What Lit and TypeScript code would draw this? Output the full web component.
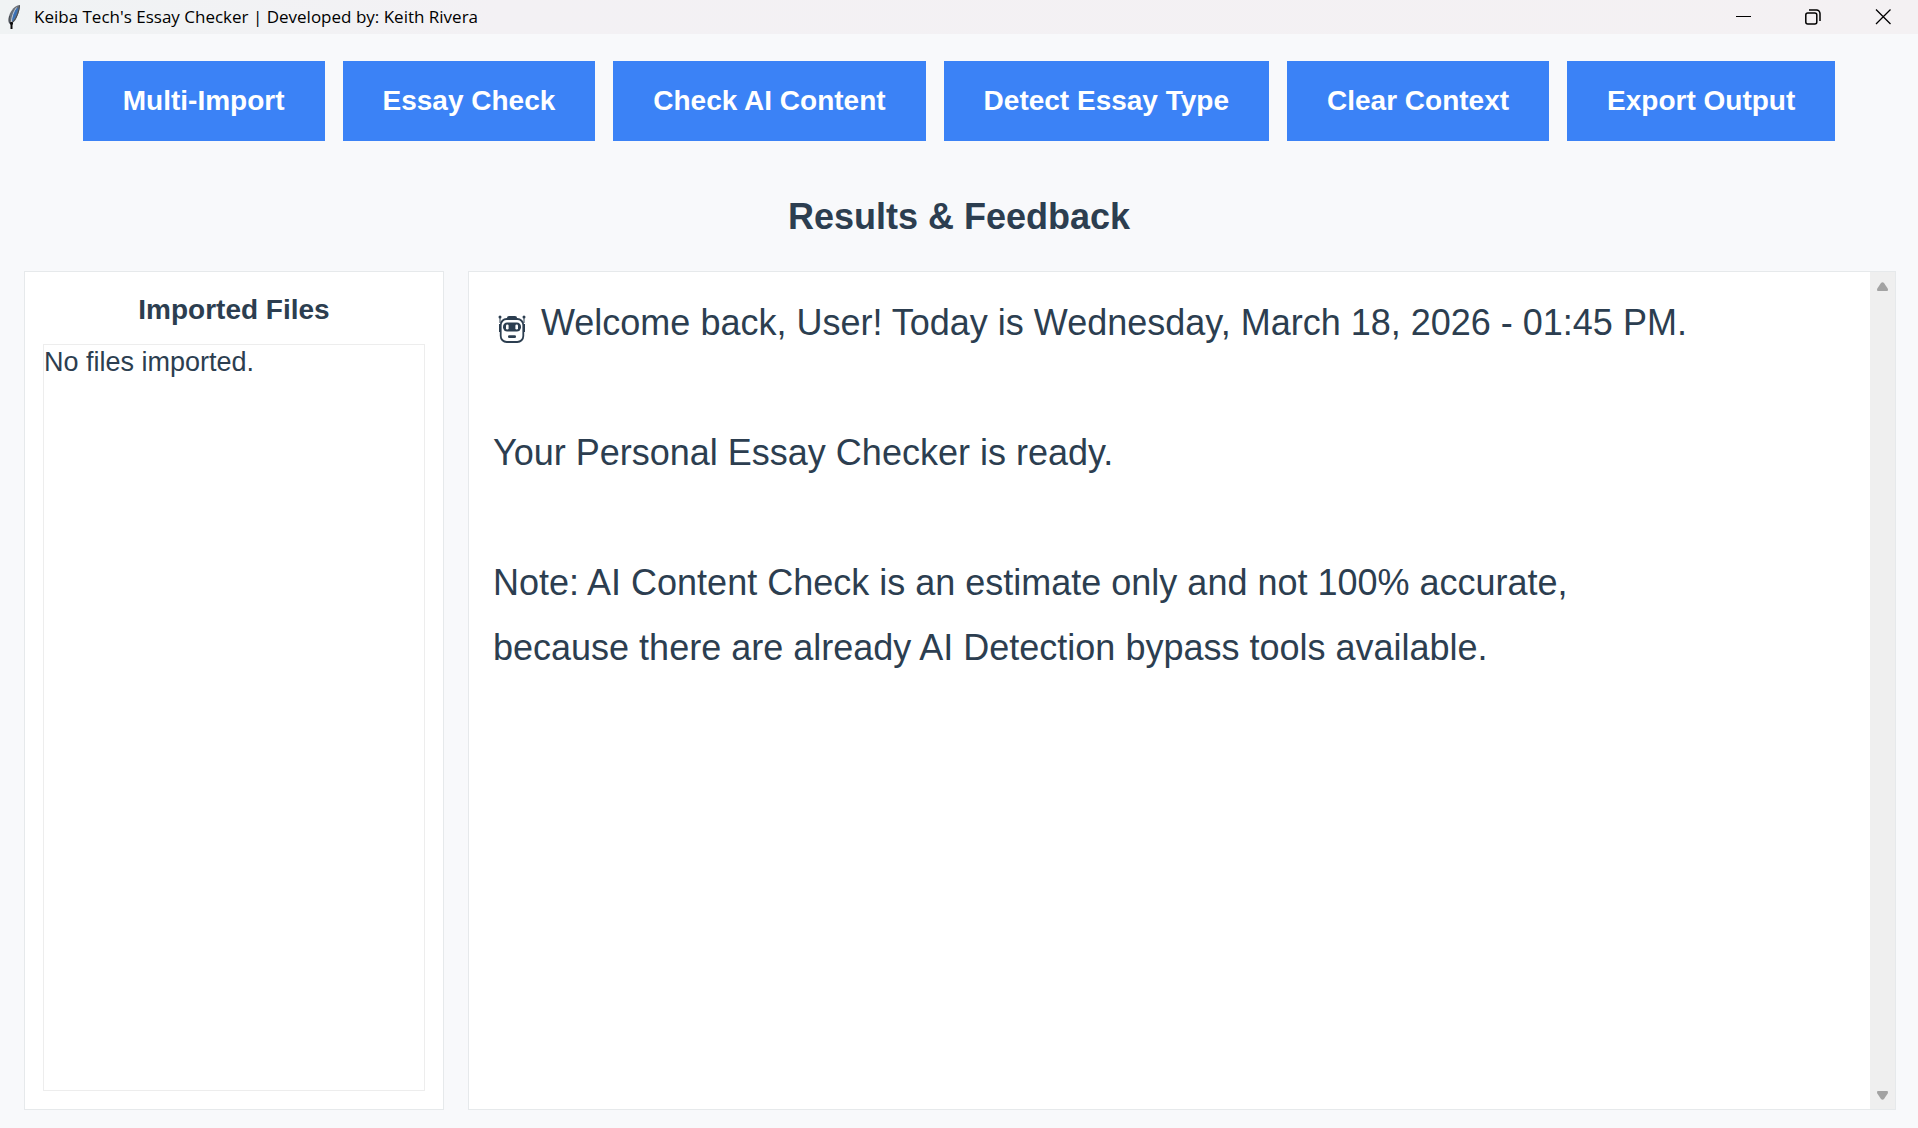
import { LitElement, html, svg, css } from "lit";
import { customElement, property, state } from "lit/decorators.js";

@customElement("window-title-bar")
class WindowTitleBar extends LitElement {
  static styles = css`
    :host {
      display: block;
    }
    .bar {
      display: flex;
      align-items: center;
      height: 34px;
      padding-left: 7px;
      background: linear-gradient(90deg, #f0f3f4 0, #f3f1f4 26%, #f4f1f3 100%);
      color: #000;
    }
    .feather {
      flex: none;
      width: 14px;
      height: 26px;
    }
    .caption {
      flex: 1;
      margin: 0 0 0 13px;
      font: 400 17px/34px "Open Sans", "Noto Sans", sans-serif;
      white-space: nowrap;
    }
    .control {
      display: flex;
      align-items: center;
      justify-content: center;
      width: 70px;
      height: 34px;
      padding: 0;
      border: 0;
      background: none;
      color: inherit;
    }
    .control svg {
      width: 16px;
      height: 16px;
      fill: none;
      stroke: currentColor;
    }
  `;

  @property() caption = "";

  render() {
    return html`
      <header class="bar">
        <svg class="feather" viewBox="0 0 14 26" aria-hidden="true">
          <path d="M13 1C8 1 4 6 2 12c-1 4-.8 7 .8 8 3-.5 5.700-3 7.200-7C11.500 9 13 5 13 1Z" fill="#6b7077" />
          <path d="M11.500 3.500C8 4.500 5.500 8.500 4.800 12.500L4.200 18c2.200-1.500 4-4 5-7 1-2.700 1.800-5 2.300-7.500Z" fill="#3a70b5" />
          <path d="M9.500 3.500C6.500 7.500 4.700 13 4.300 18" fill="none" stroke="#c5ccd4" />
          <path d="M12.500 1.500C12.300 6.500 9.800 14 6 18M2.700 12C2 15 2 17.500 3 19" fill="none" stroke="#454b52" />
          <path d="M4.500 18v7M3 19.500h3" fill="none" stroke="#0c0c0c" stroke-width="2" />
        </svg>
        <h1 class="caption">${this.caption}</h1>
        <button class="control" aria-label="Minimize">
          <svg viewBox="0 0 16 16"><path d="M1 7.500h15" /></svg>
        </button>
        <button class="control" aria-label="Restore">
          <svg viewBox="0 0 16 16" stroke-width="1.500">
            <rect x=".8" y="4" width="11" height="11" rx="2" />
            <path d="M4 1h7.500a3.500 3.500 0 0 1 3.500 3.500v7.500" />
          </svg>
        </button>
        <button class="control" aria-label="Close">
          <svg viewBox="0 0 16 16" stroke-width="1.300"><path d="M1 .5l14.500 14.500M15.500 .5L1 15" /></svg>
        </button>
      </header>
    `;
  }
}

@customElement("file-panel")
class FilePanel extends LitElement {
  static styles = css`
    :host {
      display: flex;
    }
    .panel {
      flex: 1;
      display: flex;
      flex-direction: column;
      padding: 18px;
      border: 1px solid #e6e9eb;
      background: #fff;
    }
    .heading {
      margin: 0 0 15px;
      font: 700 28px/39px "Liberation Sans", Arial, sans-serif;
      text-align: center;
    }
    .files {
      flex: 1;
      margin: 0;
      padding: 0;
      border: 1px solid #ededed;
      list-style: none;
      font: 400 27px/34px "Liberation Sans", Arial, sans-serif;
    }
  `;

  @property({ attribute: false }) files: string[] = [];

  render() {
    const rows = this.files.length ? this.files : ["No files imported."];
    return html`
      <section class="panel" aria-labelledby="files-heading">
        <h2 class="heading" id="files-heading">Imported Files</h2>
        <ul class="files">
          ${rows.map((row) => html`<li>${row}</li>`)}
        </ul>
      </section>
    `;
  }
}

const robot = svg`
  <path d="M2 2v6M26 2v6" fill="none" stroke="#2c3e50" stroke-width="1" />
  <circle cx="2" cy="2" r="1.500" />
  <circle cx="26" cy="2" r="1.500" />
  <path d="M9 4V2.500Q9 1 11 1h6q2 0 2 1.500V4Z" />
  <path d="M2 9v8M26 9v8" fill="none" stroke="#2c3e50" stroke-width="2" />
  <rect x="2.700" y="4" width="22.600" height="23" rx="6" fill="none" stroke="#2c3e50" stroke-width="1.800" />
  <rect x="5" y="7.500" width="18" height="9" rx="4.200" />
  <rect x="8" y="9.500" width="2.600" height="5" rx="1.300" fill="#fff" />
  <rect x="17.400" y="9.500" width="2.600" height="5" rx="1.300" fill="#fff" />
  <rect x="10" y="20.300" width="8" height="2.700" rx="1.300" />
`;

@customElement("output-panel")
class OutputPanel extends LitElement {
  static styles = css`
    :host {
      display: flex;
    }
    .panel {
      flex: 1;
      display: flex;
      border: 1px solid #e6e9eb;
      background: #fff;
    }
    .text {
      flex: 1;
      padding: 18px 24px;
      font: 400 36px/65px "Liberation Sans", Arial, sans-serif;
    }
    .line {
      min-height: 65px;
      margin: 0;
    }
    .robot {
      width: 28px;
      height: 28px;
      margin: 0 15px 0 5px;
      vertical-align: -8px;
      fill: #2c3e50;
    }
    .scrollbar {
      display: flex;
      flex-direction: column;
      justify-content: space-between;
      width: 25px;
      background: #efefef;
    }
    .arrow {
      display: flex;
      align-items: center;
      justify-content: center;
      height: 28px;
      padding: 0;
      border: 0;
      background: none;
    }
    .arrow svg {
      width: 11px;
      height: 9px;
      fill: #a3a3a3;
    }
  `;

  @property({ attribute: false }) lines: string[] = [];

  render() {
    return html`
      <section class="panel" aria-label="Output">
        <div class="text">
          ${this.lines.map(
            (line, i) => html`<p class="line">${
              i === 0 ? html`<svg class="robot" viewBox="0 0 28 28" role="img" aria-label="Robot">${robot}</svg>` : ""
            }${line}</p>`
          )}
        </div>
        <div class="scrollbar">
          <button class="arrow" aria-label="Scroll up">
            <svg viewBox="0 0 11 9"><path d="M4 1Q5.500-.6 7 1l3.700 5.500Q11.500 9 10 9H1Q-.5 9 .3 6.500Z" /></svg>
          </button>
          <button class="arrow" aria-label="Scroll down">
            <svg viewBox="0 0 11 9"><path d="M4 8Q5.500 9.600 7 8l3.700-5.500Q11.500 0 10 0H1Q-.5 0 .3 2.500Z" /></svg>
          </button>
        </div>
      </section>
    `;
  }
}

@customElement("app-root")
class AppRoot extends LitElement {
  static styles = css`
    :host {
      display: flex;
      flex-direction: column;
      min-height: 100vh;
      background: #f8f9fb;
      color: #2c3e50;
      font-family: "Liberation Sans", Arial, sans-serif;
    }
    .toolbar {
      display: flex;
      flex-wrap: wrap;
      justify-content: center;
      gap: 18px;
      padding: 27px 24px 0;
    }
    .action {
      height: 80px;
      padding: 0 40px;
      border: 0;
      background: #3b82f6;
      color: #fff;
      font: 700 28px/32px "Liberation Sans", Arial, sans-serif;
      white-space: nowrap;
    }
    .title {
      margin: 0;
      padding: 54px 24px 33px;
      font-size: 36px;
      line-height: 43px;
      text-align: center;
    }
    .content {
      flex: 1;
      display: grid;
      grid-template-columns: 420px 1fr;
      gap: 24px;
      padding: 0 22px 18px 24px;
    }
  `;

  @state() private files: string[] = [];

  private actions = [
    "Multi-Import",
    "Essay Check",
    "Check AI Content",
    "Detect Essay Type",
    "Clear Context",
    "Export Output",
  ];

  private lines = [
    "Welcome back, User! Today is Wednesday, March 18, 2026 - 01:45 PM.",
    "",
    "Your Personal Essay Checker is ready.",
    "",
    "Note: AI Content Check is an estimate only and not 100% accurate,",
    "because there are already AI Detection bypass tools available.",
  ];

  render() {
    return html`
      <window-title-bar caption="Keiba Tech's Essay Checker | Developed by: Keith Rivera"></window-title-bar>
      <nav class="toolbar" aria-label="Essay tools">
        ${this.actions.map((label) => html`<button class="action">${label}</button>`)}
      </nav>
      <h2 class="title">Results &amp; Feedback</h2>
      <main class="content">
        <file-panel .files=${this.files}></file-panel>
        <output-panel .lines=${this.lines}></output-panel>
      </main>
    `;
  }
}
